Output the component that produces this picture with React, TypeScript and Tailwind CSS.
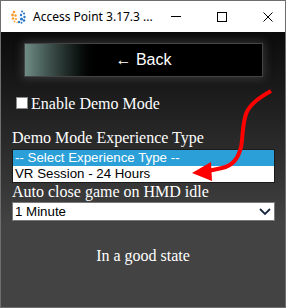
import React from "react";

function AppIcon() {
  const orange = [
    [4, 2, 1.3], [2.5, 5, 1.4], [5.5, 5.5, 1.2], [3, 8.5, 1.3], [6, 9, 1], [4.5, 11.5, 0.9], [7, 12.5, 0.7],
  ];
  const blue = [
    [12, 1.5, 1], [14, 3.5, 1.1], [11, 5, 1.2], [14.5, 7, 1.2], [11.5, 9, 1.6], [14, 10.5, 1.3], [9, 12, 1.2], [11.5, 12.8, 1],
  ];
  return (
    <svg width="17" height="14" viewBox="0 0 17 14" className="shrink-0">
      {orange.map(([x, y, r], i) => (
        <circle key={"o" + i} cx={x} cy={y} r={r} fill="#f39a2b" />
      ))}
      {blue.map(([x, y, r], i) => (
        <circle key={"b" + i} cx={x} cy={y} r={r} fill="#2a78c8" />
      ))}
    </svg>
  );
}

export default function App() {
  return (
    <div className="relative w-[286px] h-[308px] border border-[#6e6e6e] flex flex-col overflow-hidden">
      {/* Title bar */}
      <div className="h-[31px] bg-white flex items-center shrink-0">
        <div className="pl-[9px] pr-[6px] flex items-center">
          <AppIcon />
        </div>
        <span className="flex-1 text-[12px] text-black font-['Segoe_UI','Noto_Sans',sans-serif] whitespace-nowrap">
          Access Point 3.17.3 ...
        </span>
        <div className="flex h-full">
          <div className="w-[46px] flex items-center justify-center">
            <div className="w-[10px] h-px bg-black" />
          </div>
          <div className="w-[46px] flex items-center justify-center">
            <div className="w-[10px] h-[10px] border border-black" />
          </div>
          <div className="w-[46px] flex items-center justify-center">
            <svg width="10" height="10" viewBox="0 0 10 10">
              <path d="M0.5 0.5 L9.5 9.5 M9.5 0.5 L0.5 9.5" stroke="#000" strokeWidth="1" />
            </svg>
          </div>
        </div>
      </div>

      {/* Content */}
      <div className="flex-1 flex flex-col bg-linear-to-b from-[#0b0b0b] to-[#434343] to-70% font-['Liberation_Serif',serif] text-white text-[16px] leading-[18px]">
        {/* Back button */}
        <div className="mt-[11px] ml-[23px] w-[239px] h-[34px] border border-[#444] bg-linear-to-r from-[#6f8d85] to-black to-[32%] shadow-[0_0_8px_2px_rgba(90,90,90,0.45)] flex items-center justify-center">
          <span className="font-['Liberation_Sans',sans-serif] text-[16px] text-white">← Back</span>
        </div>

        {/* Enable demo */}
        <div className="mt-[18px] ml-[15px] flex items-start gap-[3px]">
          <div className="mt-[2px] w-[12px] h-[12px] bg-white border border-[#8a8a8a]" />
          <span>Enable Demo Mode</span>
        </div>

        <div className="pl-[11px] flex flex-col">
          <span className="mt-[16px]">Demo Mode Experience Type</span>

          <div className="mt-[2px] w-[263px] border border-[#1b1b1b] bg-white font-['Liberation_Sans',sans-serif] text-[13.3px] leading-[16px]">
            <div className="h-[16px] bg-[#2a9fd8] text-white pl-[2px]">-- Select Experience Type --</div>
            <div className="h-[16px] text-black pl-[2px]">VR Session - 24 Hours</div>
          </div>

          <span>Auto close game on HMD idle</span>

          <div className="mt-px w-[263px] h-[19px] bg-white border border-[#7a7a7a] flex items-center font-['Liberation_Sans',sans-serif] text-[13.3px] text-black pl-[2px] pr-[3px]">
            <span className="flex-1">1 Minute</span>
            <svg width="12" height="7" viewBox="0 0 12 7">
              <path d="M1 1 L6 6 L11 1" fill="none" stroke="#1a2740" strokeWidth="1.8" />
            </svg>
          </div>
        </div>

        <div className="mt-[26px] text-center">In a good state</div>
      </div>

      {/* Red annotation arrow */}
      <svg className="absolute left-[-1px] top-[-1px] pointer-events-none" width="286" height="308" viewBox="0 0 286 308">
        <path
          d="M271 91 C 258 98 249 105 246 114 C 242 126 243 138 241 147 C 238 160 232 166 222 168 L 208 171"
          fill="none"
          stroke="#ff0000"
          strokeWidth="4"
        />
        <polygon points="192,173 211,162 212,181" fill="#ff0000" />
      </svg>
    </div>
  );
}
